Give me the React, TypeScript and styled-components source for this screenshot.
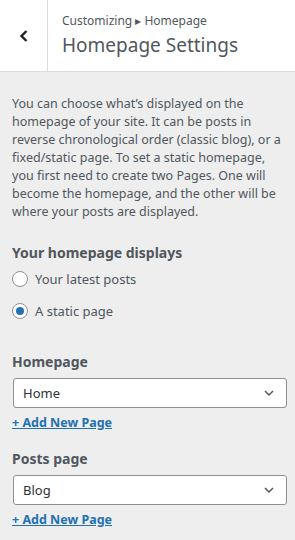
import React, { useState } from 'react';
import styled, { createGlobalStyle } from 'styled-components';

const GlobalStyle = createGlobalStyle`
  html, body {
    margin: 0;
    padding: 0;
    background: #eeeeee;
  }
  body {
    font-family: 'Noto Sans', 'Open Sans', sans-serif;
    color: #50575e;
  }
  * { box-sizing: border-box; }
`;

const Panel = styled.div`
  width: 295px;
  min-height: 540px;
  background: #eeeeee;
`;

const Header = styled.div`
  display: flex;
  height: 72px;
  background: #fff;
  border-bottom: 1px solid #dcdcde;
`;

const BackButton = styled.button`
  width: 48px;
  flex: none;
  display: flex;
  align-items: center;
  justify-content: center;
  background: transparent;
  border: none;
  border-right: 1px solid #dcdcde;
  padding: 0;
  color: #1d2327;
  cursor: pointer;
`;

const TitleBlock = styled.div`
  display: flex;
  flex-direction: column;
  justify-content: center;
  padding: 0 14px;
`;

const Crumb = styled.span`
  font-size: 12px;
  line-height: 16px;
  color: #50575e;
`;

const Title = styled.h2`
  margin: 3px 0 0;
  font-size: 19px;
  font-weight: 400;
  line-height: 26px;
  color: #50575e;
`;

const Body = styled.div`
  padding: 23px 8px 12px 12px;
`;

const Description = styled.p`
  margin: 0 4px 22px 0;
  font-size: 12.5px;
  line-height: 18px;
  color: #50575e;
`;

const Heading = styled.div`
  font-size: 14px;
  font-weight: 700;
  line-height: 20px;
  color: #50575e;
  margin-bottom: 6px;
`;

const RadioList = styled.div`
  display: flex;
  flex-direction: column;
  gap: 12px;
  margin-bottom: 31px;
`;

const RadioRow = styled.label`
  display: flex;
  align-items: center;
  gap: 7px;
  font-size: 13px;
  line-height: 20px;
  cursor: pointer;
`;

const RadioDot = styled.span<{ $checked: boolean }>`
  width: 16px;
  height: 16px;
  border-radius: 50%;
  border: 1px solid #8c8f94;
  background: #fff;
  display: flex;
  align-items: center;
  justify-content: center;
  &::after {
    content: '';
    width: 8px;
    height: 8px;
    border-radius: 50%;
    background: ${p => (p.$checked ? '#2271b1' : 'transparent')};
  }
`;

const Field = styled.div`
  margin-bottom: 17px;
`;

const SelectBox = styled.div`
  display: flex;
  align-items: center;
  justify-content: space-between;
  height: 30px;
  margin-left: 1px;
  padding: 0 10px 0 9px;
  background: #fff;
  border: 1px solid #8c8f94;
  border-radius: 3px;
  font-size: 13px;
  color: #2c3338;
`;

const AddLink = styled.a`
  display: inline-block;
  margin-top: 6px;
  font-size: 12.5px;
  font-weight: 700;
  line-height: 18px;
  color: #2271b1;
  text-decoration: underline;
`;

const Chevron = () => (
  <svg width="14" height="14" viewBox="0 0 14 14" fill="none">
    <path d="M3 5l4 4 4-4" stroke="#50575e" strokeWidth="1.5" />
  </svg>
);

const options = ['Your latest posts', 'A static page'];

export default function App() {
  const [choice, setChoice] = useState(1);

  return (
    <Panel>
      <GlobalStyle />
      <Header>
        <BackButton aria-label="Back">
          <svg width="12" height="16" viewBox="0 0 12 16" fill="none">
            <path d="M8.5 3L3.5 8l5 5" stroke="#1d2327" strokeWidth="2.4" />
          </svg>
        </BackButton>
        <TitleBlock>
          <Crumb>Customizing ▸ Homepage</Crumb>
          <Title>Homepage Settings</Title>
        </TitleBlock>
      </Header>
      <Body>
        <Description>
          You can choose what’s displayed on the homepage of your site. It can be posts in
          reverse chronological order (classic blog), or a fixed/static page. To set a static
          homepage, you first need to create two Pages. One will become the homepage, and the
          other will be where your posts are displayed.
        </Description>
        <Heading>Your homepage displays</Heading>
        <RadioList>
          {options.map((o, i) => (
            <RadioRow key={o} onClick={() => setChoice(i)}>
              <RadioDot $checked={choice === i} />
              {o}
            </RadioRow>
          ))}
        </RadioList>
        <Field>
          <Heading>Homepage</Heading>
          <SelectBox>
            Home
            <Chevron />
          </SelectBox>
          <AddLink href="#">+ Add New Page</AddLink>
        </Field>
        <Field>
          <Heading>Posts page</Heading>
          <SelectBox>
            Blog
            <Chevron />
          </SelectBox>
          <AddLink href="#">+ Add New Page</AddLink>
        </Field>
      </Body>
    </Panel>
  );
}
